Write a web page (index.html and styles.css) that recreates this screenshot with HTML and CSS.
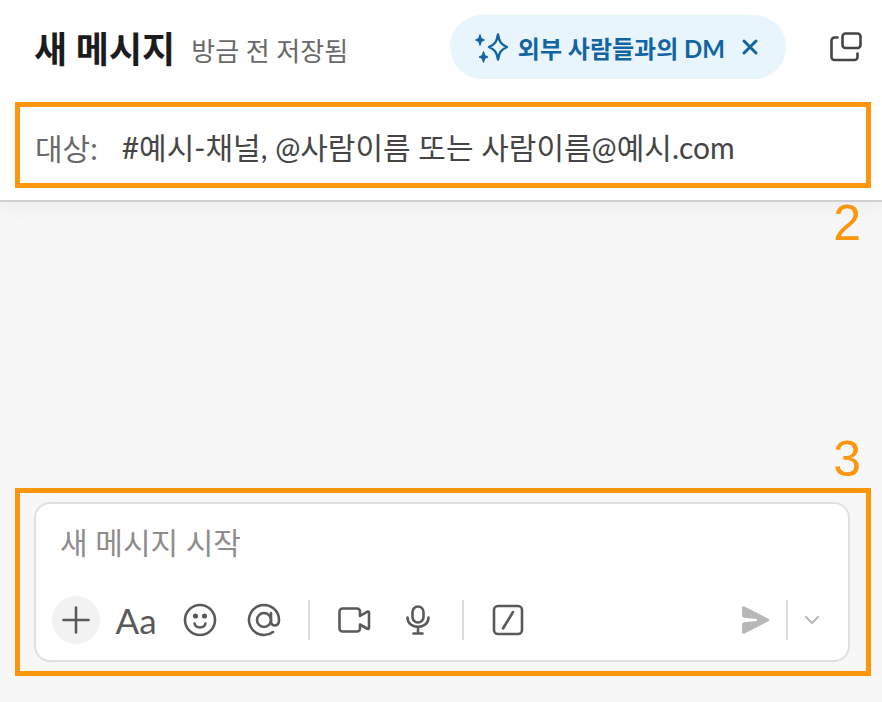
FILE: index.html
```
<!DOCTYPE html>
<html lang="ko">
<head>
    <meta charset="UTF-8">
    <meta name="viewport" content="width=device-width, initial-scale=1.0">
    <title>새 메시지</title>
    <link rel="stylesheet" href="styles.css">
</head>
<body>
    <header class="header">
        <div class="title-row">
            <h1>새 메시지</h1>
            <span class="saved">방금 전 저장됨</span>
            <div class="pill">
                <button type="button" class="pill-label">
                    <svg width="36" height="32" viewBox="0 0 36 32" fill="none" stroke="currentColor" stroke-width="2.4" stroke-linejoin="round" aria-hidden="true">
                        <path d="M24 3.5C25.2 10.5 26.8 13.3 33 16C26.8 18.700 25.200 21.500 24 28.500C22.800 21.500 21.200 18.700 15 16C21.200 13.300 22.800 10.500 24 3.500Z"/>
                        <path fill="currentColor" stroke-width="1" d="M6 3.500L7.400 7.600L10.500 9L7.400 10.400L6 14.500L4.600 10.400L1.500 9L4.600 7.600ZM9.500 20.500L10.900 24.600L14 26L10.900 27.400L9.500 31.500L8.100 27.400L5 26L8.100 24.600Z"/>
                    </svg>
                    외부 사람들과의 DM
                </button>
                <button type="button" class="pill-close" aria-label="닫기">
                    <svg width="20" height="20" viewBox="0 0 20 20" fill="none" stroke="currentColor" stroke-width="3" stroke-linecap="round" aria-hidden="true">
                        <path d="M4 4L16 16M16 4L4 16"/>
                    </svg>
                </button>
            </div>
            <button type="button" class="icon-btn" aria-label="새 창에서 열기">
                <svg width="36" height="36" viewBox="0 0 36 36" fill="none" stroke="currentColor" stroke-width="2.6" stroke-linecap="round" stroke-linejoin="round" aria-hidden="true">
                    <rect x="14.500" y="4.500" width="18" height="14.500" rx="3"/>
                    <path d="M9.500 8.500H6.500A3 3 0 0 0 3.500 11.500V28A3 3 0 0 0 6.500 31H26.500A3 3 0 0 0 29.500 28V24.500"/>
                </svg>
            </button>
        </div>
        <div class="highlight to-field">
            <label for="to">대상:</label>
            <input type="text" id="to" name="to" placeholder="#예시-채널, @사람이름 또는 사람이름@예시.com">
        </div>
    </header>

    <main class="content">
        <span class="step">2</span>
        <span class="step">3</span>
    </main>

    <footer class="highlight composer-wrap">
        <form class="composer">
            <textarea id="message" name="message" rows="1" aria-label="메시지" placeholder="새 메시지 시작"></textarea>
            <div class="toolbar">
                <button type="button" class="icon-btn plus" aria-label="첨부">
                    <svg width="36" height="36" viewBox="0 0 36 36" aria-hidden="true">
                        <path d="M18 5.500V30.500M5.500 18H30.500"/>
                    </svg>
                </button>
                <div class="tools">
                    <button type="button" class="icon-btn format" aria-label="서식">Aa</button>
                    <button type="button" class="icon-btn" aria-label="이모티콘">
                        <svg width="36" height="36" viewBox="0 0 36 36" aria-hidden="true">
                            <circle cx="18" cy="18" r="15"/>
                            <circle class="dot" cx="13.500" cy="14" r="2.600"/>
                            <circle class="dot" cx="22.500" cy="14" r="2.600"/>
                            <path d="M12.500 21.500C14 26.800 22 26.800 23.500 21.500"/>
                        </svg>
                    </button>
                    <button type="button" class="icon-btn" aria-label="멘션">
                        <svg width="36" height="36" viewBox="0 0 36 36" aria-hidden="true">
                            <circle cx="18" cy="18" r="7"/>
                            <path d="M25 11V19.500C25 25 33 25 33 18A15 15 0 1 0 27 30"/>
                        </svg>
                    </button>
                </div>
                <span class="divider"></span>
                <div class="tools">
                    <button type="button" class="icon-btn" aria-label="비디오 클립">
                        <svg width="36" height="36" viewBox="0 0 36 36" aria-hidden="true">
                            <path d="M6.500 6.500H21A3 3 0 0 1 24 9.500V14L31 9.800Q33 9 33 11V25.500Q33 27.500 31 26.500L24 22.500V26.500A3 3 0 0 1 21 29.500H6.500A3 3 0 0 1 3.500 26.500V9.500A3 3 0 0 1 6.500 6.500Z"/>
                        </svg>
                    </button>
                    <button type="button" class="icon-btn" aria-label="오디오 클립">
                        <svg width="36" height="36" viewBox="0 0 36 36" aria-hidden="true">
                            <rect x="12.500" y="4.500" width="11" height="16" rx="5.500"/>
                            <path d="M7.500 15.500C7.500 28 28.500 28 28.500 15.500M18 25V31M13.500 31.500H22.500"/>
                        </svg>
                    </button>
                </div>
                <span class="divider"></span>
                <button type="button" class="icon-btn" aria-label="바로 가기">
                    <svg width="36" height="36" viewBox="0 0 36 36" aria-hidden="true">
                        <rect x="4" y="4" width="28" height="28" rx="4"/>
                        <path d="M23 10L13 26.500"/>
                    </svg>
                </button>
                <div class="send-group">
                    <button type="submit" class="icon-btn" aria-label="전송">
                        <svg class="send-icon" width="36" height="36" viewBox="0 0 36 36" aria-hidden="true">
                            <path d="M6 6Q6 3.500 8.500 4.500L32 16.500Q34.500 18 32 19.500L8.500 31.500Q6 32.500 6 30V22.500Q6 20.500 8 20.300L20.500 19Q21.700 18 20.500 17L8 15.700Q6 15.500 6 13.500Z"/>
                        </svg>
                    </button>
                    <span class="divider"></span>
                    <button type="button" class="icon-btn chevron" aria-label="전송 옵션">
                        <svg width="20" height="20" viewBox="0 0 20 20" aria-hidden="true">
                            <path d="M4 7L10 13L16 7"/>
                        </svg>
                    </button>
                </div>
            </div>
        </form>
    </footer>
</body>
</html>
```

FILE: styles.css
```
* {
    margin: 0;
    padding: 0;
    box-sizing: border-box;
    font-family: Lato, "Noto Sans CJK KR", sans-serif;
}

body {
    display: flex;
    flex-direction: column;
    min-height: 100vh;
    background-color: #f7f7f7;
    color: #1d1c1d;
}

button {
    border: none;
    background: none;
    color: inherit;
    cursor: pointer;
}

svg {
    display: block;
}

.header {
    padding: 15px 11px 12px 15px;
    background-color: white;
    border-bottom: 2px solid #d0d0d0;
    box-shadow: 0 2px 24px rgba(0, 0, 0, 0.06);
}

.title-row {
    display: flex;
    align-items: center;
    height: 64px;
    margin-bottom: 23px;
    padding-right: 1px;
    padding-left: 19px;
    white-space: nowrap;
}

h1 {
    font-size: 36px;
    font-weight: bold;
}

.saved {
    margin-left: 16px;
    padding-top: 4px;
    font-size: 26px;
    color: #696969;
}

.pill {
    display: flex;
    align-items: center;
    gap: 15px;
    height: 64px;
    margin-left: auto;
    padding: 0 26px 0 24px;
    border-radius: 32px;
    background-color: #e8f5fc;
    color: #1264a3;
}

.pill-label {
    display: flex;
    align-items: center;
    gap: 8px;
    font-size: 24px;
    font-weight: bold;
}

.icon-btn {
    display: flex;
    flex-shrink: 0;
    align-items: center;
    justify-content: center;
    width: 48px;
    height: 48px;
    border-radius: 50%;
    color: #5a5a5a;
}

.title-row .icon-btn {
    margin-left: 36px;
    color: #454545;
}

.highlight {
    border: 5px solid #fc960c;
}

.to-field {
    display: flex;
    align-items: center;
    gap: 24px;
    height: 86px;
    padding: 4px 15px 0;
    font-size: 30px;
}

.to-field label {
    color: #696969;
}

.to-field input {
    flex: 1;
    min-width: 0;
    border: none;
    outline: none;
    background: none;
    font-size: 30px;
}

.to-field input::placeholder {
    color: #454545;
}

.content {
    display: flex;
    flex: 1;
    flex-direction: column;
    align-items: flex-end;
    justify-content: space-between;
    padding: 0 21px 8px;
}

.step {
    color: #fc960c;
    font-family: "Liberation Sans", Arial, sans-serif;
    font-size: 50px;
    line-height: 42px;
}

.composer-wrap {
    margin: 0 11px 26px 15px;
    padding: 9px 16px 9px 14px;
}

.composer {
    border: 2px solid #e0e0e0;
    border-radius: 16px;
    background-color: white;
}

textarea {
    display: block;
    width: 100%;
    height: 92px;
    padding: 16px 24px 32px;
    border: none;
    border-radius: 16px;
    outline: none;
    background: none;
    font-size: 30px;
    line-height: 44px;
    resize: none;
}

textarea::placeholder {
    color: #8d8d8d;
}

.toolbar {
    display: flex;
    align-items: center;
    padding: 0 20px 16px 16px;
}

.toolbar svg {
    fill: none;
    stroke: currentColor;
    stroke-width: 2.6;
    stroke-linecap: round;
    stroke-linejoin: round;
}

.toolbar .dot {
    fill: currentColor;
    stroke: none;
}

.plus {
    margin-right: 12px;
    background-color: #f2f2f2;
}

.tools {
    display: flex;
    gap: 16px;
}

.format {
    font-family: Lato, sans-serif;
    font-size: 35px;
}

.divider {
    width: 2px;
    height: 40px;
    margin: 0 20px;
    background-color: #dddddd;
}

.send-group {
    display: flex;
    align-items: center;
    margin-left: auto;
}

.send-group .icon-btn {
    color: #b8b8b8;
}

.send-group .divider {
    margin: 0 8px;
}

.toolbar .send-icon {
    fill: currentColor;
    stroke: none;
}

.send-group .chevron {
    width: 32px;
}

.chevron svg {
    stroke-width: 2;
}
```
